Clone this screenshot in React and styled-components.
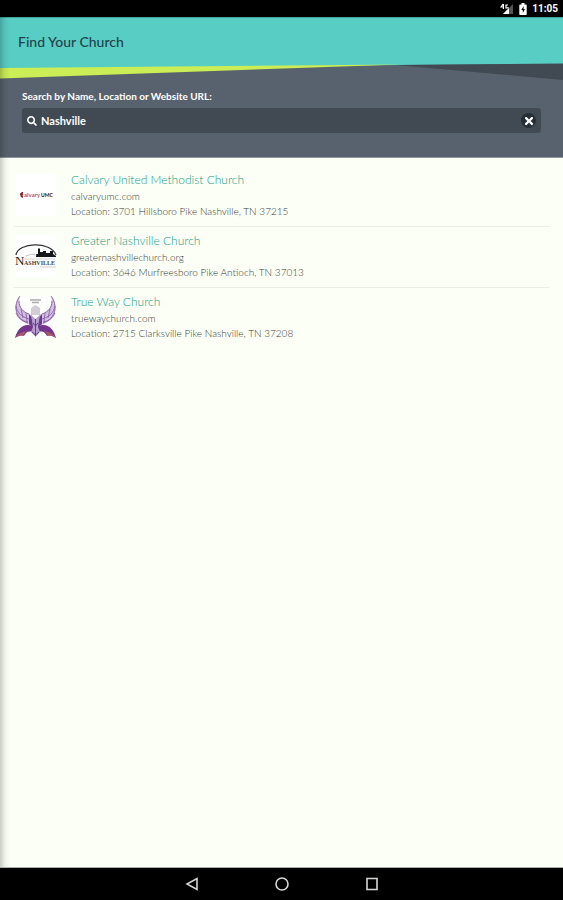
import { useState } from 'react'
import styled, { createGlobalStyle } from 'styled-components'
import { FaSearch, FaTimes } from 'react-icons/fa'

const GlobalStyle = createGlobalStyle`
  * {
    box-sizing: border-box;
  }
  body {
    margin: 0;
    background-color: #fcfff5;
    font-family: Lato, 'Open Sans', sans-serif;
  }
`

const Screen = styled.div`
  display: flex;
  flex-direction: column;
  min-height: 100vh;
`

const StatusBar = styled.div`
  display: flex;
  align-items: center;
  justify-content: flex-end;
  gap: 5px;
  height: 17px;
  padding-right: 5px;
  background-color: #000;
  color: #fff;
  font: 700 10px/17px Roboto, sans-serif;
  & svg {
    display: block;
  }
`

const Page = styled.main`
  position: relative;
  flex: 1;
  background-color: #fcfff5;
  border-bottom: 1px solid #a9aba4;
  &::before {
    content: '';
    position: absolute;
    z-index: 1;
    top: 0;
    bottom: 0;
    left: 0;
    width: 10px;
    background: linear-gradient(to right, rgba(0, 0, 0, 0.2), rgba(0, 0, 0, 0.05) 50%, transparent);
    pointer-events: none;
  }
`

const Header = styled.header`
  height: 46px;
  padding: 15px 18px 0;
  background-color: #58cdc4;
  border-top: 1px solid #3fa39c;
`

const Title = styled.h1`
  margin: 0;
  color: #24434c;
  font-size: 14px;
  font-weight: 500;
  line-height: 18px;
`

const Divider = styled.svg`
  display: block;
  width: 100%;
  height: 18px;
  background-color: #58626e;
`

const SearchPanel = styled.form`
  padding: 8px 22px 24px;
  background-color: #58626e;
  border-bottom: 1px solid #8f979c;
`

const SearchLabel = styled.label`
  display: block;
  margin-bottom: 5px;
  color: #fff;
  font-size: 10px;
  font-weight: 700;
  line-height: 14px;
`

const SearchField = styled.div`
  display: flex;
  align-items: center;
  gap: 4px;
  height: 25px;
  padding: 0 5px;
  border-radius: 3px;
  background-color: #414a52;
  color: #fff;
`

const SearchInput = styled.input`
  flex: 1;
  min-width: 0;
  padding: 0;
  border: 0;
  outline: 0;
  background: none;
  color: #fff;
  font: 700 11px/16px Lato, sans-serif;
`

const ClearButton = styled.button`
  display: flex;
  align-items: center;
  justify-content: center;
  width: 15px;
  height: 15px;
  padding: 0;
  border: 0;
  border-radius: 50%;
  background-color: #272f36;
  color: #fff;
  cursor: pointer;
`

const ChurchList = styled.ul`
  margin: 0;
  padding: 8px 14px;
  list-style: none;
`

const ChurchItem = styled.li`
  display: flex;
  gap: 14px;
  height: 61px;
  padding-top: 6px;
  border-bottom: 1px solid #eceee5;
  &:last-child {
    border-bottom: 0;
  }
`

const Logo = styled.svg`
  flex: none;
  width: 43px;
  height: 46px;
`

const ChurchName = styled.a`
  display: block;
  margin-bottom: 1px;
  color: #159d88;
  font-size: 12px;
  font-weight: 300;
  line-height: 16px;
  text-decoration: none;
`

const Detail = styled.p`
  margin: 0;
  color: #3a3d3a;
  font-size: 10px;
  font-weight: 300;
  line-height: 15px;
`

const NavBar = styled.nav`
  display: flex;
  align-items: center;
  justify-content: center;
  gap: 74px;
  height: 32px;
  background-color: #000;
`

const NavButton = styled.button`
  width: 16px;
  height: 16px;
  padding: 0;
  border: 0;
  background: none;
  & svg {
    display: block;
    fill: none;
    stroke: #d6d6d6;
    stroke-width: 1.6;
  }
`

const SignalIcon = () => (
  <svg width="14" height="12" viewBox="0 0 14 12">
    <path d="M13 1v10H3z" fill="#555" />
    <path d="M9 5v6H3z" fill="#fff" />
    <path d="M3 1L1 4h3M3.4 1v5M8 2H6v3h2V4" fill="none" stroke="#fff" strokeWidth="1.2" />
  </svg>
)

const BatteryIcon = () => (
  <svg width="8" height="12" viewBox="0 0 8 12">
    <path d="M2.5 0h3v1.5H7a.7.7 0 0 1 .7.7v9a.7.7 0 0 1-.7.7H1a.7.7 0 0 1-.7-.7v-9a.7.7 0 0 1 .7-.7h1.5z" fill="#fff" />
    <path d="M4.7 3L2.3 7h1.5v3L6 6H4.5z" fill="#000" />
  </svg>
)

const CalvaryLogo = () => (
  <Logo viewBox="0 0 43 44" aria-hidden="true">
    <rect x="1" y="1" width="41" height="42" fill="#fff" />
    <path d="M9 20a2 2 0 1 0 0 4M8 19v5M6 21h3" fill="none" stroke="#8c2028" strokeWidth="1.3" />
    <text x="10" y="24" fontSize="6" fontWeight="700" fill="#c0535a" fontFamily="Lato, sans-serif">alvary</text>
    <text x="27" y="24" fontSize="5" fontWeight="900" fill="#333" fontFamily="Lato, sans-serif">UMC</text>
  </Logo>
)

const NashvilleLogo = () => (
  <Logo viewBox="0 0 43 44" aria-hidden="true">
    <rect x="1" y="1" width="41" height="42" fill="#fff" />
    <path d="M2 21C4 8 37 7 42 21" fill="none" stroke="#333" strokeWidth="1.2" />
    <path d="M22 23v-3h2v-5l1-1 1 1v3h3v-1h3v2h4v-2h3v3l3 2v1z" fill="#15161a" />
    <path d="M12 22q5-3 11-1" fill="none" stroke="#aaa" strokeWidth=".7" />
    <text x="1" y="31" fontSize="13" fill="#222" fontFamily="Liberation Serif, serif">N</text>
    <text x="10" y="31" fontSize="6" fontWeight="700" fill="#444" fontFamily="Liberation Serif, serif">ASHVILLE</text>
    <path d="M10 25H41M26 33H42" stroke="#bbb" strokeWidth=".7" />
  </Logo>
)

const wing = (
  <>
    <path d="M6 1C-2 9 0 24 13 29l7 3-2-12-7-3C6 12 4 8 6 1z" fill="#d3bfe0" />
    <path
      d="M6 1C-1 10 1 24 14 28M5 6c0 7 4 11 10 13M2 11c1 7 6 11 13 13M2 18c2 5 6 8 12 9M7 14l2 9M12 18l1 9"
      fill="none"
      stroke="#8a62a8"
      strokeWidth=".9"
    />
    <path d="M1 43C4 32 11 27 20 32v6c-5-3-8-1-10 3-3-1-6 0-9 2z" fill="#76358c" />
    <path d="M1 43c3-5 8-6 12-7-2 1-3 3-4 5-3-1-5 0-8 2z" fill="#a75a62" />
    <path d="M15 19l5 6v9l-5-5z" fill="#6a3b90" />
  </>
)

const TrueWayLogo = () => (
  <Logo viewBox="0 0 43 44" aria-hidden="true">
    <rect x="1" y="1" width="41" height="42" fill="#fff" />
    {wing}
    <g transform="translate(43 0) scale(-1 1)">{wing}</g>
    <path d="M16 5h11M18 7.5h7" stroke="#aaa" strokeWidth="1.5" />
    <path d="M17 13l4.5-3 4.5 3v7h-9z" fill="#d3ccd6" />
    <path d="M17 20l4.5 4 4.5-4-2 12 2 5-4.5 5-4.5-5 2-5z" fill="#b39dca" />
    <path d="M21.5 24v17M18 37l3.5 3 3.5-3M19 28l2.5 3 2.5-3" fill="none" stroke="#6b3d92" strokeWidth="1" />
  </Logo>
)

const churches = [
  {
    name: 'Calvary United Methodist Church',
    site: 'calvaryumc.com',
    location: '3701 Hillsboro Pike Nashville, TN 37215',
    Picture: CalvaryLogo
  },
  {
    name: 'Greater Nashville Church',
    site: 'greaternashvillechurch.org',
    location: '3646 Murfreesboro Pike Antioch, TN 37013',
    Picture: NashvilleLogo
  },
  {
    name: 'True Way Church',
    site: 'truewaychurch.com',
    location: '2715 Clarksville Pike Nashville, TN 37208',
    Picture: TrueWayLogo
  }
]

const Church = ({ name, site, location, Picture }) => (
  <ChurchItem>
    <Picture />
    <div>
      <ChurchName href={`#${site}`}>{name}</ChurchName>
      <Detail>{site}</Detail>
      <Detail>Location: {location}</Detail>
    </div>
  </ChurchItem>
)

const App = () => {
  const [query, setQuery] = useState('Nashville')

  return (
    <Screen>
      <GlobalStyle />
      <StatusBar>
        <SignalIcon />
        <BatteryIcon />
        <span>11:05</span>
      </StatusBar>

      <Page>
        <Header>
          <Title>Find Your Church</Title>
        </Header>
        <Divider viewBox="0 0 563 18" preserveAspectRatio="none" aria-hidden="true">
          <path d="M0 0H563V1L400 2L0 6z" fill="#58cdc4" />
          <path d="M0 5L400 1.5L0 15.5z" fill="#cbed55" />
          <path d="M395 2L563 .5V17z" fill="#414a52" />
        </Divider>

        <SearchPanel onSubmit={e => e.preventDefault()}>
          <SearchLabel htmlFor="search">Search by Name, Location or Website URL:</SearchLabel>
          <SearchField>
            <FaSearch size={10} />
            <SearchInput id="search" value={query} onChange={e => setQuery(e.target.value)} />
            <ClearButton type="button" aria-label="Clear" onClick={() => setQuery('')}>
              <FaTimes size={12} />
            </ClearButton>
          </SearchField>
        </SearchPanel>

        <ChurchList>
          {churches.map(church => (
            <Church key={church.site} {...church} />
          ))}
        </ChurchList>
      </Page>

      <NavBar>
        <NavButton aria-label="Back">
          <svg width="16" height="16" viewBox="0 0 16 16">
            <path d="M13 2.5v11L3 8z" />
          </svg>
        </NavButton>
        <NavButton aria-label="Home">
          <svg width="16" height="16" viewBox="0 0 16 16">
            <circle cx="8" cy="8" r="6" />
          </svg>
        </NavButton>
        <NavButton aria-label="Recent apps">
          <svg width="16" height="16" viewBox="0 0 16 16">
            <path d="M3 2.5h10v11H3z" />
          </svg>
        </NavButton>
      </NavBar>
    </Screen>
  )
}

export default App
